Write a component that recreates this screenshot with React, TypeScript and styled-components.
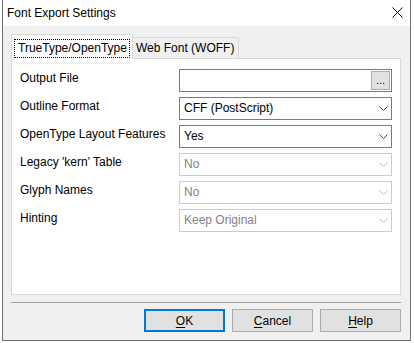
import React from "react";
import styled, { createGlobalStyle, css } from "styled-components";

const GlobalStyle = createGlobalStyle`
  html, body {
    margin: 0;
    padding: 0;
    background: #ffffff;
  }
  body {
    font-family: "Segoe UI", "Liberation Sans", Arial, sans-serif;
    font-size: 12px;
    color: #000000;
  }
`;

const Desktop = styled.div`
  width: 414px;
  height: 343px;
  padding-left: 2px;
  box-sizing: border-box;
  overflow: hidden;
  background: #ffffff;
`;

const Window = styled.div`
  width: 409px;
  height: 341px;
  box-sizing: border-box;
  border: 1px solid #6f6f6f;
  border-top: none;
  display: flex;
  flex-direction: column;
  background: #f0f0f0;
`;

const TitleBar = styled.div`
  height: 25px;
  flex: 0 0 25px;
  background: #ffffff;
  display: flex;
  align-items: center;
  justify-content: space-between;
  padding: 0 7px 1px 4px;
`;

const Title = styled.span`
  font-size: 12px;
  line-height: 1;
`;

const Body = styled.div`
  flex: 1;
  display: flex;
  flex-direction: column;
  padding: 8px 9px 9px 8px;
`;

const TabStrip = styled.div`
  display: flex;
  align-items: flex-end;
  height: 24px;
`;

const Tab = styled.div<{ $active?: boolean }>`
  box-sizing: border-box;
  border: 1px solid #d9d9d9;
  display: flex;
  align-items: center;
  ${(p) =>
    p.$active
      ? css`
          height: 25px;
          margin-bottom: -1px;
          border-bottom: none;
          background: #ffffff;
          padding: 2px 3px 0 3px;
          position: relative;
          z-index: 1;
        `
      : css`
          height: 21px;
          border-left: none;
          border-bottom: none;
          background: #f0f0f0;
          padding: 0 4px 0 3px;
        `}
`;

const FocusLabel = styled.span`
  outline: 1px dotted #000000;
  outline-offset: 0;
  padding: 1px 2px 2px 3px;
  line-height: 14px;
`;

const Panel = styled.div`
  height: 237px;
  box-sizing: border-box;
  border: 1px solid #d9d9d9;
  background: #ffffff;
  padding: 10px 8px 0 8px;
  display: flex;
  flex-direction: column;
  gap: 5px;
`;

const Row = styled.div`
  display: grid;
  grid-template-columns: 159px 213px;
  height: 23px;
`;

const Label = styled.span`
  padding-top: 2px;
  line-height: 14px;
`;

const Field = styled.div<{ $disabled?: boolean }>`
  box-sizing: border-box;
  height: 23px;
  border: 1px solid ${(p) => (p.$disabled ? "#cccccc" : "#7a7a7a")};
  background: #ffffff;
  color: ${(p) => (p.$disabled ? "#838383" : "#000000")};
  display: flex;
  align-items: center;
  justify-content: space-between;
  padding: 0 1px 0 4px;
`;

const FieldText = styled.span`
  line-height: 14px;
  padding-bottom: 1px;
`;

const BrowseButton = styled.div`
  box-sizing: border-box;
  width: 19px;
  height: 19px;
  background: #e1e1e1;
  border: 1px solid #adadad;
  display: flex;
  align-items: flex-end;
  justify-content: center;
  font-size: 11px;
  line-height: 14px;
  padding-bottom: 2px;
`;

const Chevron = styled.svg`
  margin-right: 2px;
  flex: none;
`;

const Separator = styled.div`
  height: 1px;
  background: #a0a0a0;
  margin-top: 7px;
`;

const ButtonRow = styled.div`
  display: flex;
  justify-content: flex-end;
  gap: 7px;
  margin-top: 6px;
  padding-right: 0;
`;

const Button = styled.div<{ $default?: boolean }>`
  box-sizing: border-box;
  width: 81px;
  height: 23px;
  background: #e1e1e1;
  border: ${(p) => (p.$default ? "2px solid #0078d7" : "1px solid #adadad")};
  display: flex;
  align-items: center;
  justify-content: center;
  line-height: 14px;
`;

const Mnemonic = styled.span`
  text-decoration: underline;
  text-underline-offset: 2px;
`;

const ChevronDown: React.FC<{ disabled?: boolean }> = ({ disabled }) => (
  <Chevron width="9" height="5" viewBox="0 0 9 5">
    <path
      d="M0.5 0.5 L4.5 4.5 L8.5 0.5"
      fill="none"
      stroke={disabled ? "#bcbcbc" : "#444444"}
      strokeWidth="1"
    />
  </Chevron>
);

const CloseIcon = () => (
  <svg width="11" height="11" viewBox="0 0 11 11">
    <path d="M0.5 0.5 L10.5 10.5 M10.5 0.5 L0.5 10.5" stroke="#000" strokeWidth="1" />
  </svg>
);

type ComboRow = { label: string; value: string; disabled?: boolean };

const combos: ComboRow[] = [
  { label: "Outline Format", value: "CFF (PostScript)" },
  { label: "OpenType Layout Features", value: "Yes" },
  { label: "Legacy 'kern' Table", value: "No", disabled: true },
  { label: "Glyph Names", value: "No", disabled: true },
  { label: "Hinting", value: "Keep Original", disabled: true },
];

export default function App() {
  return (
    <>
      <GlobalStyle />
      <Desktop>
        <Window>
          <TitleBar>
            <Title>Font Export Settings</Title>
            <CloseIcon />
          </TitleBar>
          <Body>
            <TabStrip>
              <Tab $active>
                <FocusLabel>TrueType/OpenType</FocusLabel>
              </Tab>
              <Tab>Web Font (WOFF)</Tab>
            </TabStrip>
            <Panel>
              <Row>
                <Label>Output File</Label>
                <Field>
                  <FieldText />
                  <BrowseButton>...</BrowseButton>
                </Field>
              </Row>
              {combos.map((c) => (
                <Row key={c.label}>
                  <Label>{c.label}</Label>
                  <Field $disabled={c.disabled}>
                    <FieldText>{c.value}</FieldText>
                    <ChevronDown disabled={c.disabled} />
                  </Field>
                </Row>
              ))}
            </Panel>
            <Separator />
            <ButtonRow>
              <Button $default>
                <span>
                  <Mnemonic>O</Mnemonic>K
                </span>
              </Button>
              <Button>
                <span>
                  <Mnemonic>C</Mnemonic>ancel
                </span>
              </Button>
              <Button>
                <span>
                  <Mnemonic>H</Mnemonic>elp
                </span>
              </Button>
            </ButtonRow>
          </Body>
        </Window>
      </Desktop>
    </>
  );
}
